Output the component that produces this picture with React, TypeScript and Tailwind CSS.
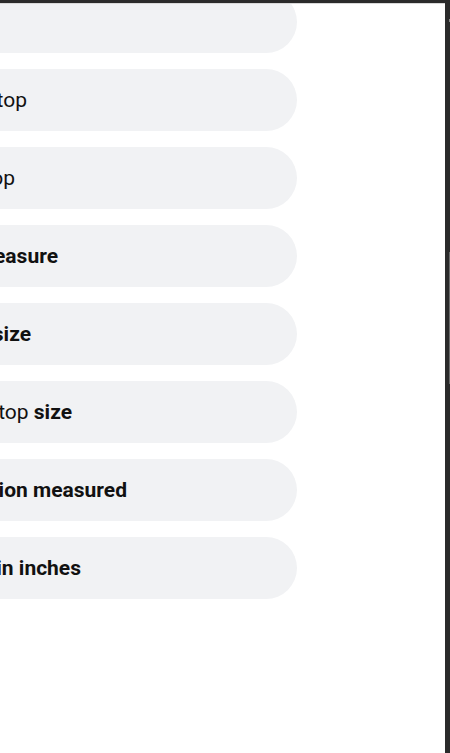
import React from "react";

type Part = { text: string; bold?: boolean };
type Row = { parts: Part[]; end: number };

// visible right end of each label, in px from the page's left edge
const rows: Row[] = [
  { parts: [], end: 0 },
  { parts: [{ text: "Laptop" }], end: 27 },
  { parts: [{ text: "Desktop" }], end: 15 },
  { parts: [{ text: "Unit of measure", bold: true }], end: 58 },
  { parts: [{ text: "Screen size", bold: true }], end: 31 },
  { parts: [{ text: "Laptop " }, { text: "size", bold: true }], end: 72 },
  { parts: [{ text: "Diagonal dimension measured", bold: true }], end: 127 },
  { parts: [{ text: "Screen size in inches", bold: true }], end: 81 },
];

const Pill = ({ row }: { row: Row }) => (
  <div className="h-[62px] w-[297px] shrink-0 rounded-r-full bg-[#f1f2f4] flex items-center">
    <div className="flex justify-end whitespace-nowrap" style={{ width: row.end }}>
      <span className="text-[21px] leading-none text-[#111]">
        {row.parts.map((p, i) => (
          <span key={i} className={p.bold ? "font-bold" : "font-normal"}>
            {p.text}
          </span>
        ))}
      </span>
    </div>
  </div>
);

export default function App() {
  return (
    <div
      className="relative w-[450px] h-[753px] bg-[#2b2b2b] flex flex-col overflow-hidden"
      style={{ fontFamily: "Roboto, 'Noto Sans', sans-serif" }}
    >
      <div className="h-[3px] shrink-0" />
      <div className="flex flex-1 min-h-0">
        <div className="w-[445px] bg-white border-t border-[#d9d9d9] overflow-hidden">
          <div className="flex flex-col gap-4 -mt-[13px]">
            {rows.map((r, i) => (
              <Pill key={i} row={r} />
            ))}
          </div>
        </div>
        <div className="flex-1" />
      </div>
      {/* scrollbar bits on the dark frame */}
      <div className="absolute right-0 top-[19px] w-[1px] h-[3px] bg-[#8a8a8a]" />
      <div className="absolute right-0 top-[252px] w-[1px] h-[132px] bg-[#6b6b6b]" />
    </div>
  );
}
